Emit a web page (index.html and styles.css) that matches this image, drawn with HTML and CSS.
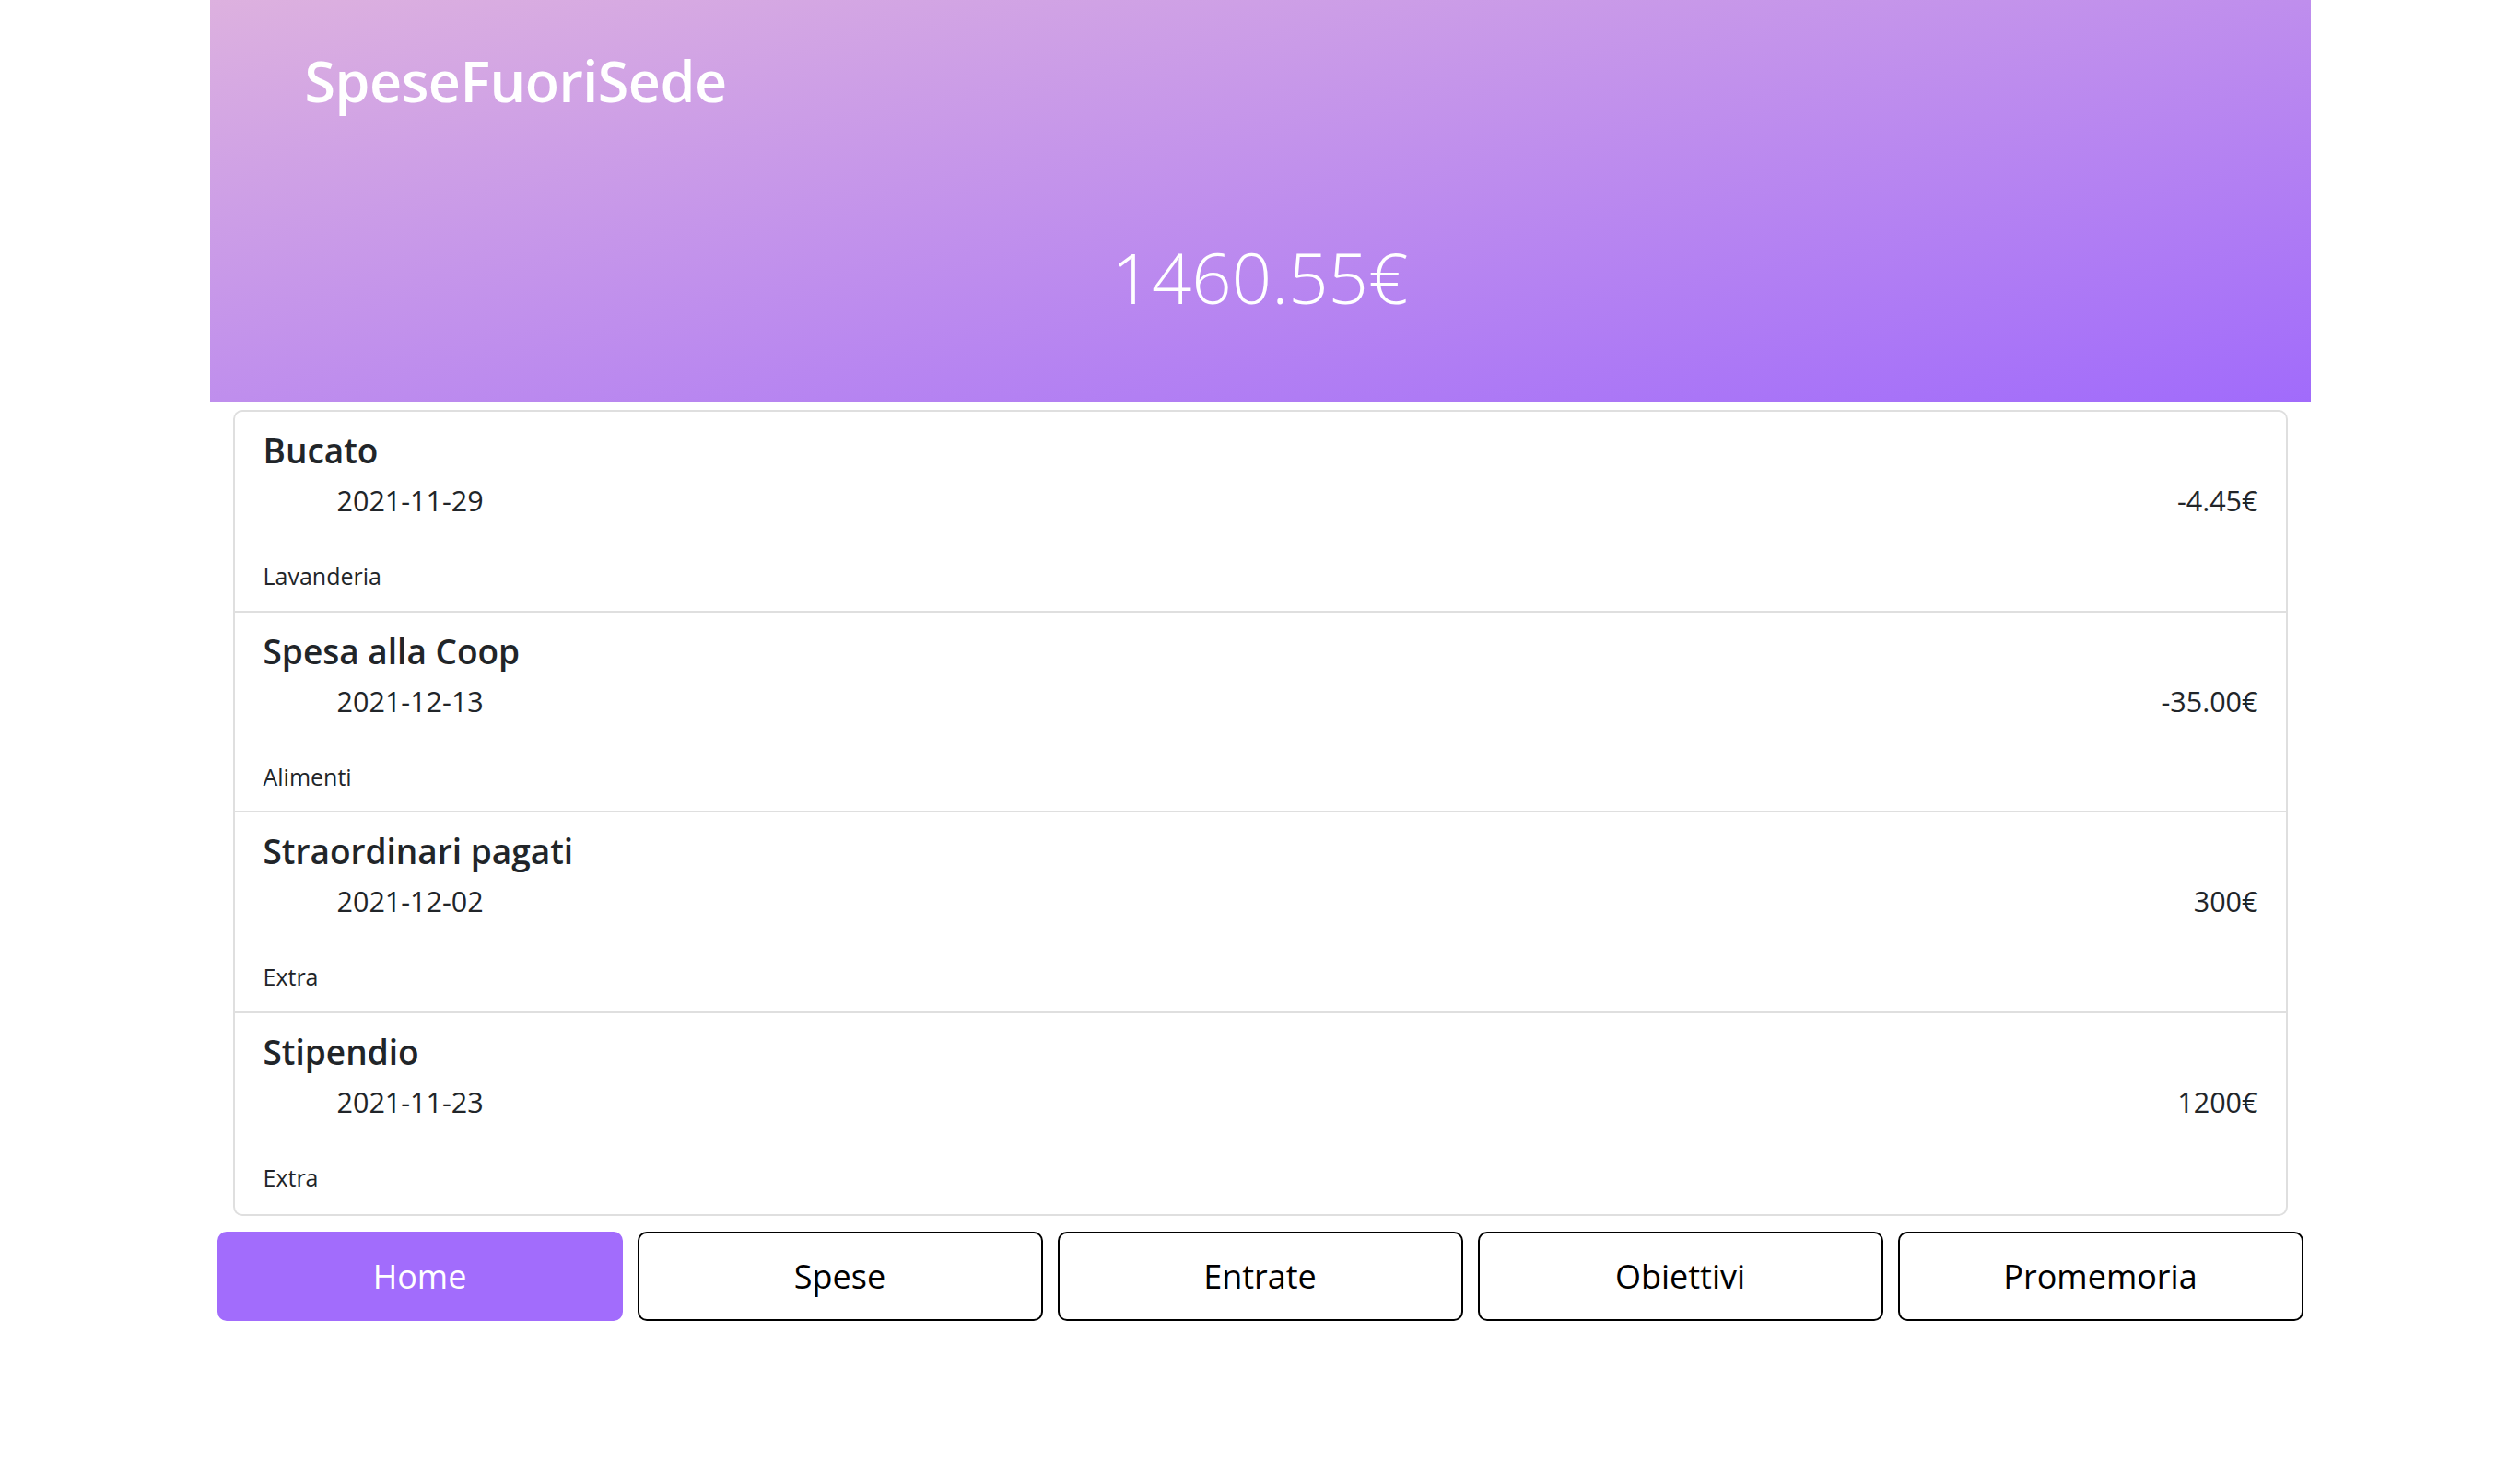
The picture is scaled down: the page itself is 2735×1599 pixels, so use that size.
FILE: index.html
```html
<!DOCTYPE html>
<html lang="it">
<head>
<meta charset="utf-8">
<title>SpeseFuoriSede</title>
<link rel="stylesheet" href="styles.css">
</head>
<body>
<div class="app">
  <header class="hero">
    <h1 class="brand">SpeseFuoriSede</h1>
    <div class="balance">1460.55€</div>
  </header>

  <ul class="list">
    <li class="item">
      <h4 class="item-title">Bucato</h4>
      <div class="item-line">
        <span class="item-date">2021-11-29</span>
        <span class="item-amount">-4.45€</span>
      </div>
      <small class="item-cat">Lavanderia</small>
    </li>
    <li class="item">
      <h4 class="item-title">Spesa alla Coop</h4>
      <div class="item-line">
        <span class="item-date">2021-12-13</span>
        <span class="item-amount">-35.00€</span>
      </div>
      <small class="item-cat">Alimenti</small>
    </li>
    <li class="item">
      <h4 class="item-title">Straordinari pagati</h4>
      <div class="item-line">
        <span class="item-date">2021-12-02</span>
        <span class="item-amount">300€</span>
      </div>
      <small class="item-cat">Extra</small>
    </li>
    <li class="item">
      <h4 class="item-title">Stipendio</h4>
      <div class="item-line">
        <span class="item-date">2021-11-23</span>
        <span class="item-amount">1200€</span>
      </div>
      <small class="item-cat">Extra</small>
    </li>
  </ul>

  <nav class="nav">
    <button class="nav-btn active">Home</button>
    <button class="nav-btn">Spese</button>
    <button class="nav-btn">Entrate</button>
    <button class="nav-btn">Obiettivi</button>
    <button class="nav-btn">Promemoria</button>
  </nav>
</div>
</body>
</html>
```

FILE: styles.css
```css
* { box-sizing: border-box; }

html, body {
  margin: 0;
  padding: 0;
  background: #ffffff;
}

body {
  font-family: "Open Sans", "Noto Sans", "Liberation Sans", sans-serif;
  color: #212529;
}

.app {
  width: 2280px;
  margin: 0 auto;
}

.hero {
  height: 436px;
  padding-top: 51px;
  background: linear-gradient(to bottom right, #ddb1df 0%, #a16bfb 100%);
  color: #ffffff;
}

.brand {
  margin: 0;
  padding-left: 103px;
  font-size: 61px;
  font-weight: 600;
  line-height: 1.2;
  letter-spacing: -0.5px;
}

.balance {
  margin-top: 131px;
  text-align: center;
  font-size: 76px;
  font-weight: 300;
  line-height: 1.2;
}

.list {
  list-style: none;
  margin: 9px 25px 0;
  padding: 0;
  border: 2px solid #dfdfdf;
  border-radius: 10px;
}

.item {
  height: 215.5px;
  padding: 20px 30px 0 31px;
}

.item + .item {
  border-top: 2px solid #dfdfdf;
  height: 217.5px;
}

.item:last-child {
  height: 220px;
}

.item-title {
  margin: 0;
  font-size: 37px;
  font-weight: 600;
  line-height: 1.2;
}

.item-line {
  display: flex;
  justify-content: space-between;
  align-items: baseline;
  margin-top: 10px;
  font-size: 30.5px;
  line-height: 1.5;
}

.item-date {
  margin-left: 80px;
}

.item-cat {
  display: block;
  margin-top: 40px;
  font-size: 25px;
  line-height: 1.5;
}

.nav {
  display: flex;
  margin-top: 17px;
}

.nav-btn {
  flex: 1 1 0;
  height: 97px;
  margin: 0 8px;
  padding: 0;
  border: 2px solid #000000;
  border-radius: 10px;
  background: #ffffff;
  color: #000000;
  font-family: "Open Sans", "Noto Sans", "Liberation Sans", sans-serif;
  font-size: 36px;
  font-weight: 400;
  cursor: pointer;
}

.nav-btn.active {
  background: #a26cfc;
  border-color: #a26cfc;
  color: #ffffff;
}
```
